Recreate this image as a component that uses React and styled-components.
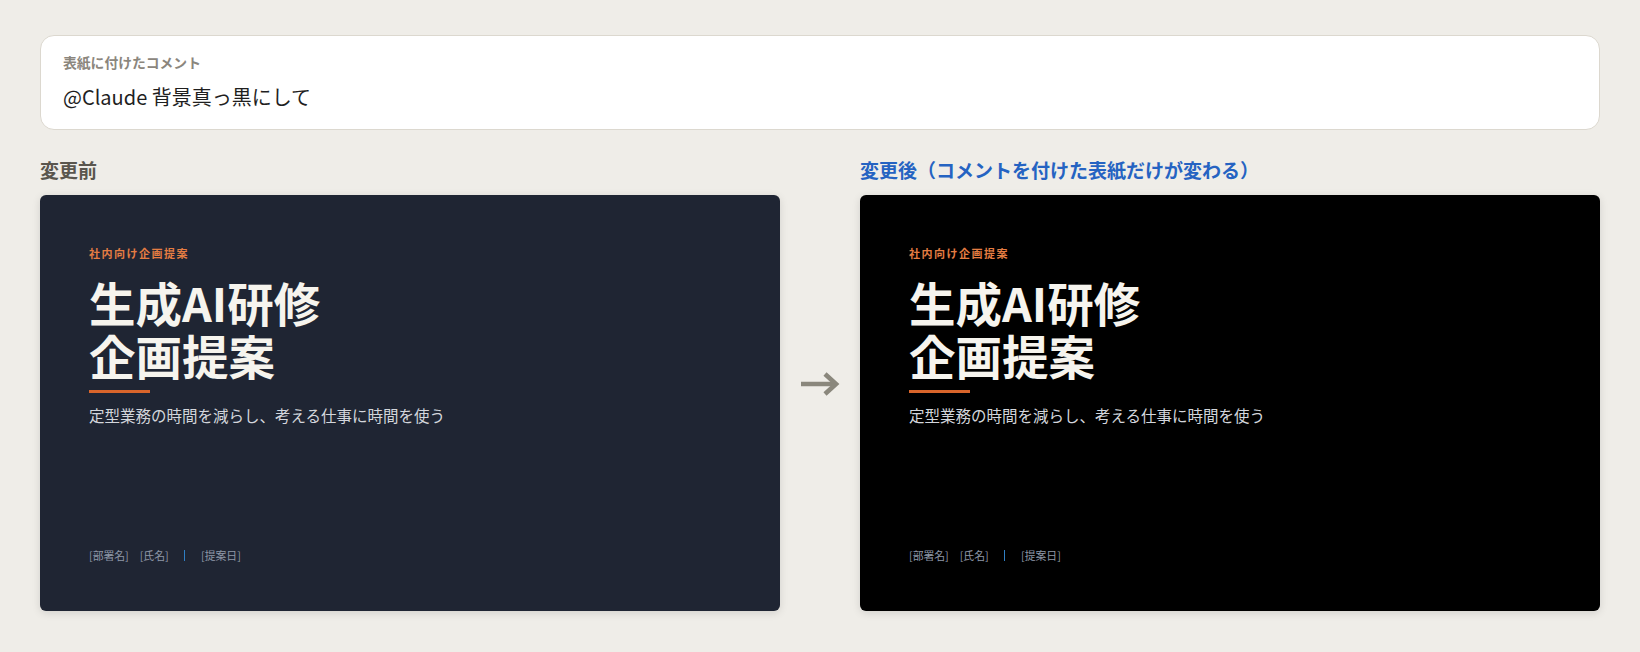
import React from "react";
import styled, { createGlobalStyle } from "styled-components";

const Global = createGlobalStyle`
  html, body { margin: 0; padding: 0; background: #efede8; }
  body { font-family: "Noto Sans CJK JP", "Noto Sans", sans-serif; }
  * { box-sizing: border-box; }
`;

const Page = styled.div`
  padding: 35px 40px 40px;
  display: flex;
  flex-direction: column;
  gap: 26px;
`;

const CommentCard = styled.div`
  background: #ffffff;
  border: 1px solid #dcd8cf;
  border-radius: 14px;
  padding: 16px 22px 18px;
  display: flex;
  flex-direction: column;
  gap: 11px;
`;

const CommentLabel = styled.div`
  font-size: 13.8px;
  line-height: 20px;
  font-weight: 700;
  color: #8b867d;
`;

const CommentText = styled.div`
  font-size: 20px;
  line-height: 28px;
  color: #1f1f1f;
`;

const Compare = styled.div`
  display: grid;
  grid-template-columns: 1fr 40px 1fr;
  column-gap: 20px;
`;

const Column = styled.div`
  display: flex;
  flex-direction: column;
  gap: 12px;
`;

const Heading = styled.div`
  font-size: 19px;
  line-height: 27px;
  font-weight: 700;
  color: ${(p) => (p.$accent ? "#2563c2" : "#5a564e")};
`;

const ArrowBox = styled.div`
  align-self: center;
  display: flex;
  justify-content: center;
  color: #8a877c;
`;

const Slide = styled.div`
  aspect-ratio: 16 / 9;
  background: ${(p) => p.$bg};
  border-radius: 6px;
  box-shadow: 0 2px 8px rgba(0, 0, 0, 0.12);
  padding: 50px 49px 47px;
  display: flex;
  flex-direction: column;
`;

const Kicker = styled.div`
  font-size: 11px;
  line-height: 16px;
  font-weight: 700;
  letter-spacing: 1.5px;
  color: #e57d43;
`;

const Title = styled.h1`
  margin: 14px 0 0;
  font-size: 46.5px;
  line-height: 53px;
  font-weight: 700;
  color: #f6f4ee;
`;

const Rule = styled.div`
  margin-top: 9px;
  width: 61px;
  height: 3px;
  background: #d9652b;
`;

const Subtitle = styled.p`
  margin: 11px 0 0;
  font-size: 15.5px;
  line-height: 22px;
  color: #d3d6dc;
`;

const Footer = styled.div`
  margin-top: auto;
  display: flex;
  align-items: center;
  font-size: 10.8px;
  line-height: 17px;
  color: #8f98a8;
`;

const Meta = styled.span`
  margin-right: ${(p) => p.$gap || 0}px;
`;

const Sep = styled.span`
  width: 1.5px;
  height: 11px;
  background: #2f7fc4;
  margin-right: 16px;
`;

function SlideCover({ bg }) {
  return (
    <Slide $bg={bg}>
      <Kicker>社内向け企画提案</Kicker>
      <Title>
        生成AI研修
        <br />
        企画提案
      </Title>
      <Rule />
      <Subtitle>定型業務の時間を減らし、考える仕事に時間を使う</Subtitle>
      <Footer>
        <Meta $gap={11}>[部署名]</Meta>
        <Meta $gap={15}>[氏名]</Meta>
        <Sep />
        <Meta>[提案日]</Meta>
      </Footer>
    </Slide>
  );
}

export default function App() {
  return (
    <>
      <Global />
      <Page>
        <CommentCard>
          <CommentLabel>表紙に付けたコメント</CommentLabel>
          <CommentText>@Claude 背景真っ黒にして</CommentText>
        </CommentCard>
        <Compare>
          <Column>
            <Heading>変更前</Heading>
            <SlideCover bg="#1f2533" />
          </Column>
          <ArrowBox>
            <svg width="40" height="26" viewBox="0 0 40 26" fill="none">
              <path d="M1 13 H36" stroke="currentColor" strokeWidth="4.6" />
              <path
                d="M25 3 L36 13 L25 23"
                stroke="currentColor"
                strokeWidth="4.6"
                strokeLinejoin="miter"
              />
            </svg>
          </ArrowBox>
          <Column>
            <Heading $accent>変更後（コメントを付けた表紙だけが変わる）</Heading>
            <SlideCover bg="#000000" />
          </Column>
        </Compare>
      </Page>
    </>
  );
}
